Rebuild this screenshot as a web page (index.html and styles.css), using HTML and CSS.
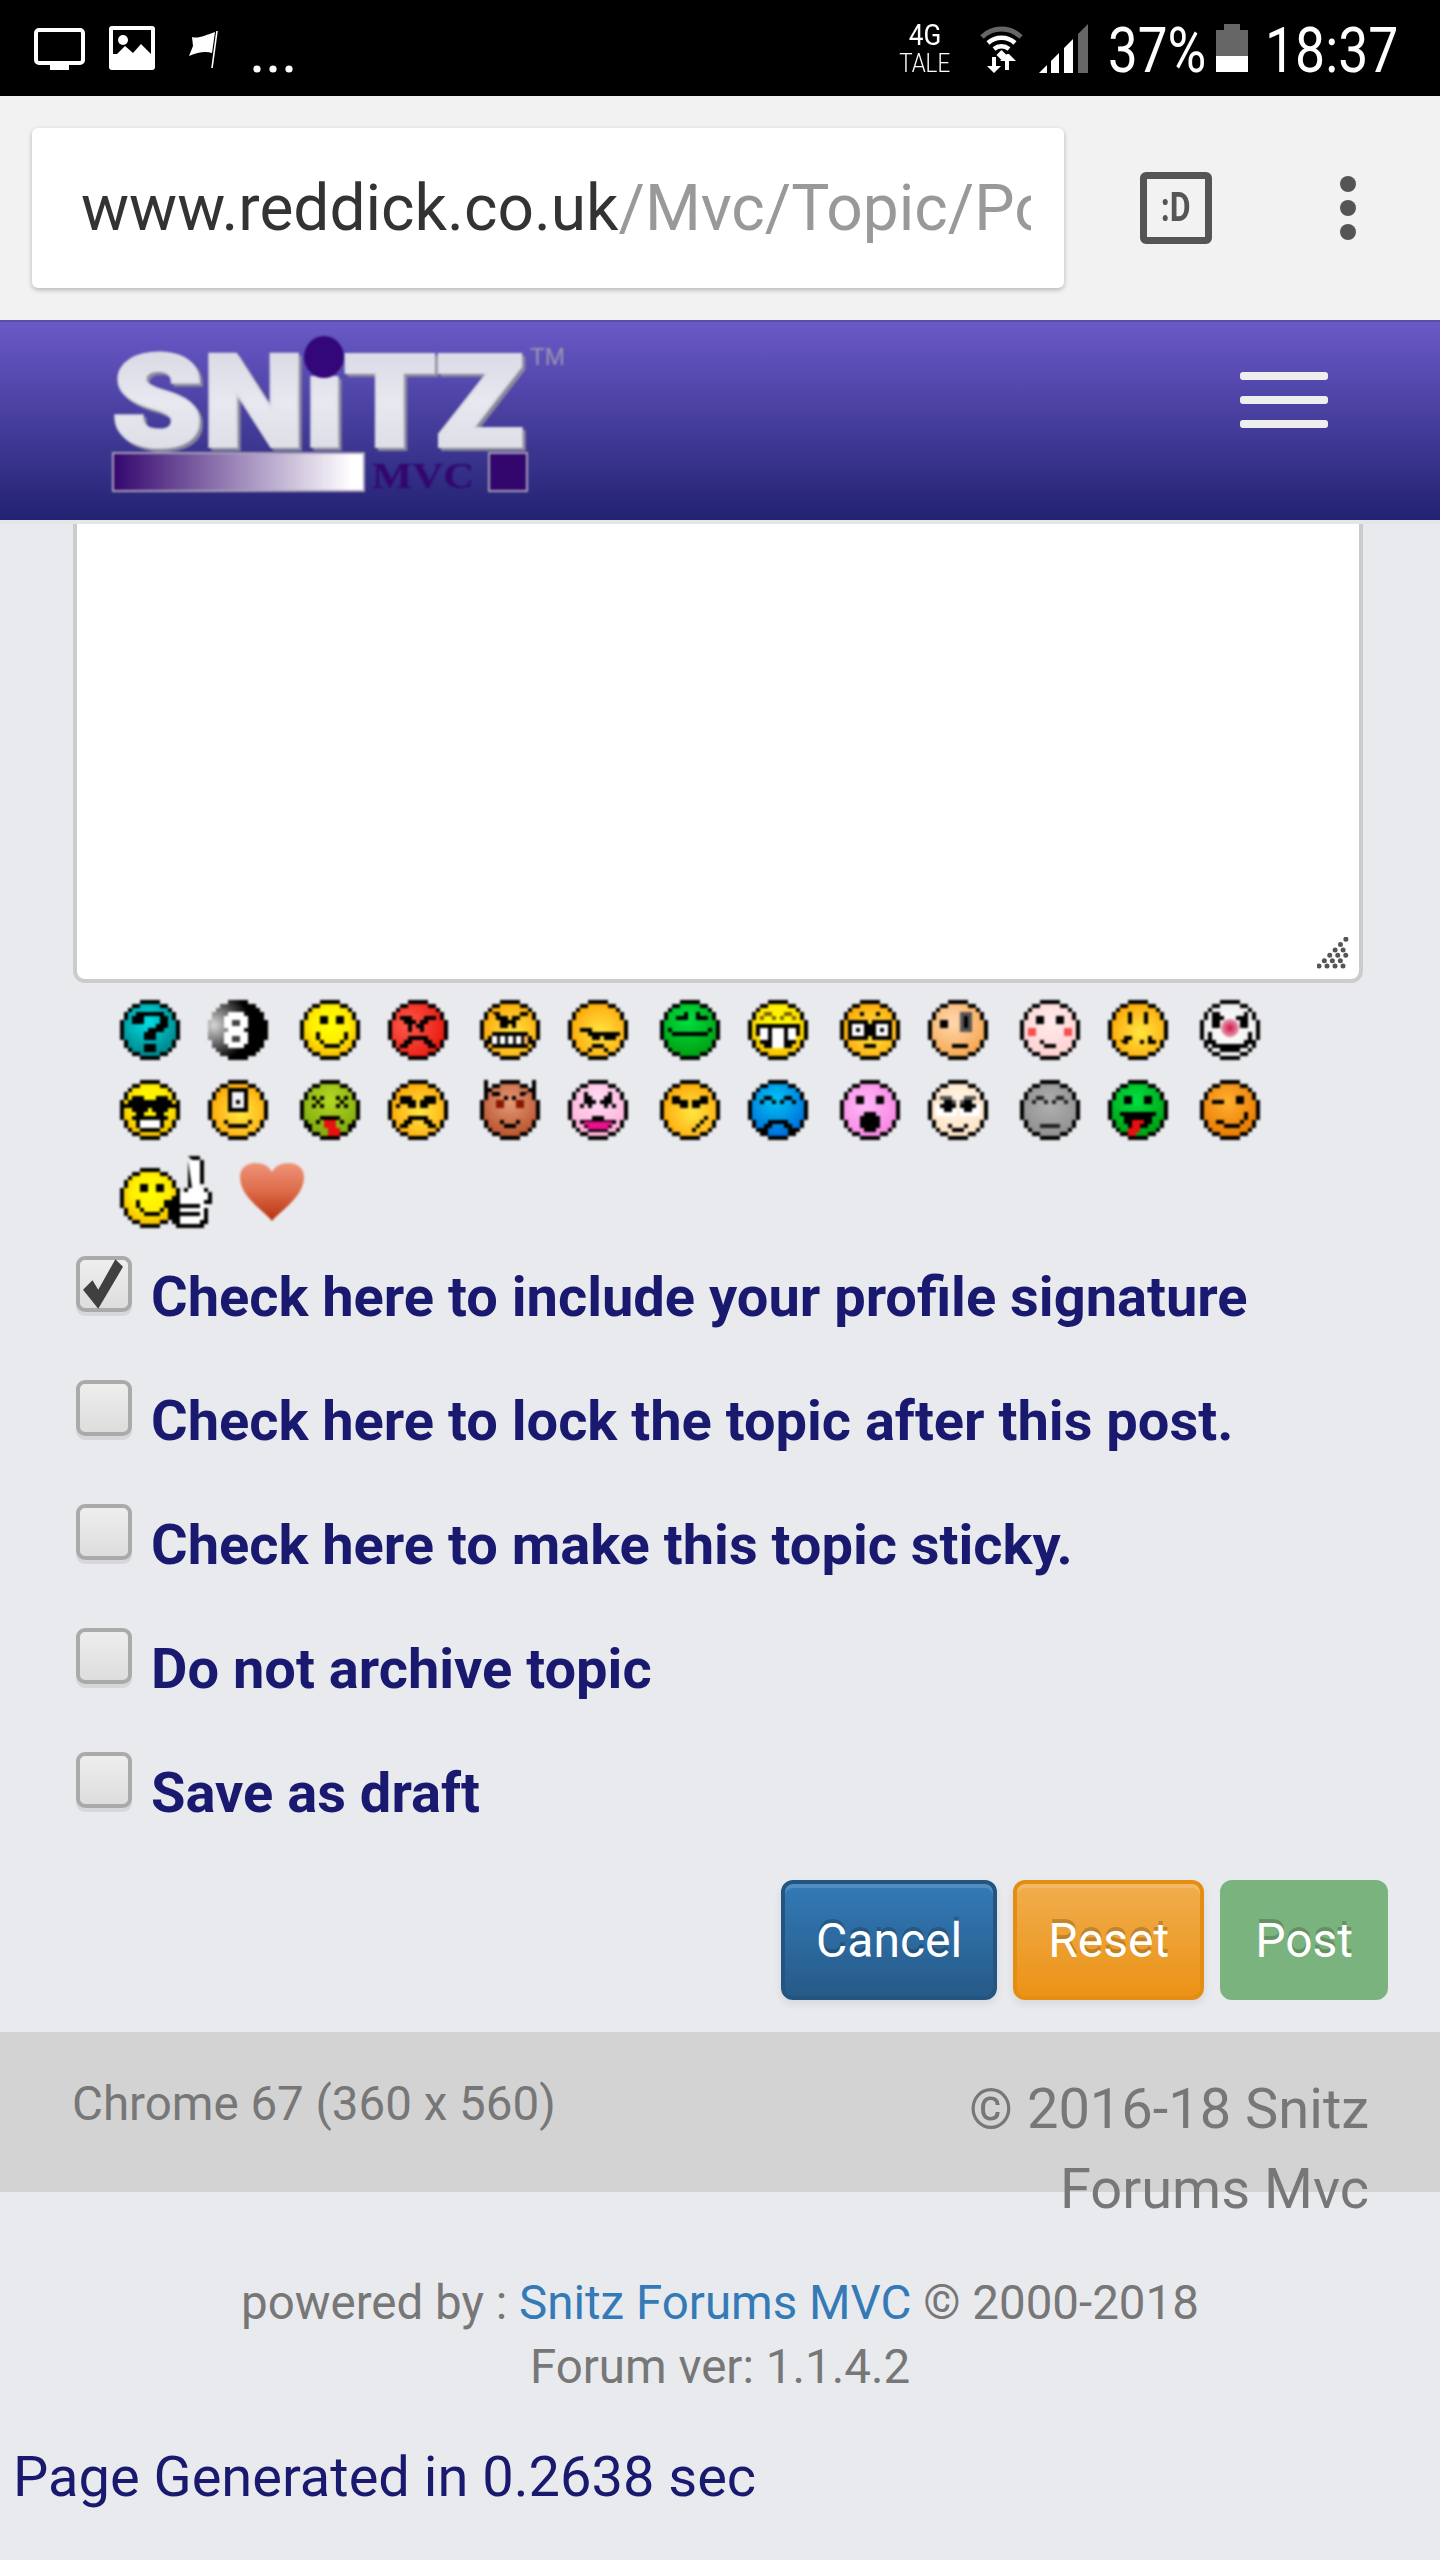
FILE: index.html
```html
<!DOCTYPE html>
<html lang="en">
<head>
<meta charset="utf-8">
<title>Snitz Forums MVC</title>
<link rel="stylesheet" href="styles.css">
</head>
<body>
<svg class="defs" aria-hidden="true">
  <defs>
    <radialGradient id="yel" cx=".5" cy=".4" r=".65"><stop offset="0" stop-color="#ffff00"/><stop offset=".55" stop-color="#ffee00"/><stop offset="1" stop-color="#f4b400"/></radialGradient>
    <radialGradient id="ora" cx=".55" cy=".55" r=".65"><stop offset="0" stop-color="#ffe640"/><stop offset=".6" stop-color="#ffbe1e"/><stop offset="1" stop-color="#fba400"/></radialGradient>
    <radialGradient id="tea" cx=".45" cy=".35" r=".7"><stop offset="0" stop-color="#00e0e4"/><stop offset="1" stop-color="#007f84"/></radialGradient>
    <radialGradient id="red" cx=".3" cy=".4" r=".8"><stop offset="0" stop-color="#ff5a4a"/><stop offset="1" stop-color="#e8140c"/></radialGradient>
    <radialGradient id="grn" cx=".45" cy=".3" r=".75"><stop offset="0" stop-color="#00e040"/><stop offset="1" stop-color="#009c10"/></radialGradient>
    <radialGradient id="pea" cx=".4" cy=".35" r=".75"><stop offset="0" stop-color="#ffd8b0"/><stop offset="1" stop-color="#f5a348"/></radialGradient>
    <radialGradient id="pal" cx=".5" cy=".35" r=".7"><stop offset="0" stop-color="#ffecec"/><stop offset="1" stop-color="#ffcfd0"/></radialGradient>
    <radialGradient id="bro" cx=".5" cy=".35" r=".7"><stop offset="0" stop-color="#e49a78"/><stop offset="1" stop-color="#b8502a"/></radialGradient>
    <radialGradient id="lim" cx=".5" cy=".3" r=".7"><stop offset="0" stop-color="#b4d820"/><stop offset="1" stop-color="#80aa10"/></radialGradient>
    <radialGradient id="lpk" cx=".5" cy=".3" r=".7"><stop offset="0" stop-color="#ffdcf4"/><stop offset="1" stop-color="#ffb0d8"/></radialGradient>
    <radialGradient id="mag" cx=".4" cy=".4" r=".7"><stop offset="0" stop-color="#ffb8f8"/><stop offset="1" stop-color="#f884e0"/></radialGradient>
    <radialGradient id="blu" cx=".45" cy=".3" r=".75"><stop offset="0" stop-color="#00c4f4"/><stop offset="1" stop-color="#0068d8"/></radialGradient>
    <radialGradient id="cre" cx=".5" cy=".4" r=".7"><stop offset="0" stop-color="#fff6e8"/><stop offset="1" stop-color="#ffe0c0"/></radialGradient>
    <radialGradient id="gry" cx=".5" cy=".4" r=".7"><stop offset="0" stop-color="#b0b0b0"/><stop offset="1" stop-color="#8c8c8c"/></radialGradient>
    <radialGradient id="dor" cx=".45" cy=".35" r=".7"><stop offset="0" stop-color="#ffb030"/><stop offset="1" stop-color="#e87800"/></radialGradient>
    <radialGradient id="wht" cx=".5" cy=".5" r=".7"><stop offset="0" stop-color="#ffffff"/><stop offset="1" stop-color="#e8e8e8"/></radialGradient>
    <radialGradient id="bal" cx=".1" cy=".42" r=".8"><stop offset="0" stop-color="#d8d8d8"/><stop offset=".45" stop-color="#555"/><stop offset=".75" stop-color="#000"/></radialGradient>
    <radialGradient id="nos" cx=".5" cy=".5" r=".5"><stop offset="0" stop-color="#d0104a"/><stop offset="1" stop-color="#e8a0b0"/></radialGradient>
    <linearGradient id="hrt" x1="0" y1="0" x2="0" y2="1"><stop offset="0" stop-color="#f0937a"/><stop offset=".5" stop-color="#dc6a48"/><stop offset="1" stop-color="#b83010"/></linearGradient>
    <linearGradient id="lbar" x1="0" y1="0" x2="1" y2="0"><stop offset="0" stop-color="#33066e"/><stop offset=".95" stop-color="#ffffff"/></linearGradient>
    <linearGradient id="lsil" x1="0" y1="0" x2="0" y2="1"><stop offset="0" stop-color="#d4d4e0"/><stop offset=".5" stop-color="#e8e8f0"/><stop offset="1" stop-color="#d8d8e2"/></linearGradient>
    <symbol id="b" viewBox="0 0 15 15">
      <path fill="#000" d="M5 0H10V1H12V2H13V3H14V5H15V10H14V12H13V13H12V14H10V15H5V14H3V13H2V12H1V10H0V5H1V3H2V2H3V1H5Z"/>
      <path d="M5 1H10V2H12V3H13V5H14V10H13V12H12V13H10V14H5V13H3V12H2V10H1V5H2V3H3V2H5Z"/>
    </symbol>
  </defs>
</svg>

<div class="status">
  <div class="st-left">
    <svg class="ic-mon" viewBox="0 0 51 42"><rect x="2" y="2" width="47" height="33" rx="3" fill="none" stroke="#fff" stroke-width="4"/><rect x="16" y="36" width="19" height="6" fill="#fff"/></svg>
    <svg class="ic-img" viewBox="0 0 46 44"><rect width="46" height="44" rx="3" fill="#fff"/><rect x="4" y="4" width="38" height="24" fill="#000"/><circle cx="14" cy="14" r="5" fill="#fff"/><path d="M4 32 L16 20 L24 27 L32 18 L42 28 V40 H4Z" fill="#fff"/></svg>
    <svg class="ic-flag" viewBox="0 0 30 37"><path d="M4 6 C10 8 18 4 27 1 L24 22 C18 20 10 21 1 25 L5 15Z" fill="#fff"/><path d="M29 0 L24 37" stroke="#fff" stroke-width="1.6"/></svg>
    <svg class="ic-dots" viewBox="0 0 40 8"><circle cx="4" cy="4" r="3.6" fill="#fff"/><circle cx="20" cy="4" r="3.6" fill="#fff"/><circle cx="36" cy="4" r="3.6" fill="#fff"/></svg>
  </div>
  <div class="st-right">
    <div class="net"><span class="net-a">4G</span><span class="net-b">TALE</span></div>
    <svg class="ic-wifi" viewBox="0 0 43 49"><path d="M2 13 A28 28 0 0 1 41 13" fill="none" stroke="#666" stroke-width="5"/><path d="M8 19 A20 20 0 0 1 35 19 M14 25 A12 12 0 0 1 29 25" fill="none" stroke="#fff" stroke-width="4.5"/><path d="M21.5 26l5 5-5 5-5-5z" fill="#fff"/><path d="M12 33v9h-5l7 7 7-7h-5v-9zM27 30l-7 7h5v9h4v-9h7l-7-7z" fill="#fff"/></svg>
    <svg class="ic-sig" viewBox="0 0 49 49"><path d="M0 49 L8 41 V49Z M12 37 L20 29 V49 H12Z M25 24 L34 15 V49 H25Z" fill="#fff"/><path d="M39 10 L49 0 V49 H39Z" fill="#666"/></svg>
    <span class="pct">37%</span>
    <svg class="ic-bat" viewBox="0 0 32 48"><path d="M8 0h16v6h8v26H0V6h8z" fill="#666"/><rect y="32" width="32" height="16" fill="#fff"/></svg>
    <span class="clock">18:37</span>
  </div>
</div>

<div class="toolbar">
  <div class="url"><span class="url-text">www.reddick.co.uk<span class="url-path">/Mvc/Topic/Posting</span></span></div>
  <div class="tabs"><span class="tabs-t">:D</span></div>
  <div class="kebab"><i></i><i></i><i></i></div>
</div>

<header class="hdr">
  <svg class="logo" viewBox="0 0 460 160" role="img" aria-label="Snitz MVC">
    <text class="logo-word" x="0" y="110" textLength="412" lengthAdjust="spacingAndGlyphs" fill="url(#lsil)">SNiTZ</text>
    <ellipse cx="212" cy="21" rx="20" ry="21" fill="#33067a"/>
    <text class="logo-tm" x="418" y="29" textLength="35" lengthAdjust="spacingAndGlyphs">TM</text>
    <rect x="1" y="117" width="251" height="38" fill="url(#lbar)" stroke="#a89fb8" stroke-width="2"/>
    <text class="logo-mvc" x="260" y="152" textLength="102" lengthAdjust="spacingAndGlyphs">MVC</text>
    <rect x="377" y="117" width="38" height="38" fill="#33066e" stroke="#a89fb8" stroke-width="2"/>
  </svg>
  <button class="burger" type="button" aria-label="Menu"><i></i><i></i><i></i></button>
</header>

<main class="main">
  <div class="area">
    <svg class="grip" viewBox="0 0 32 32"><path d="M2 29L29 2M10 29L29 10M18 29L29 18M26 29L29 26" fill="none" stroke="#555" stroke-width="5" stroke-linecap="round" stroke-dasharray="0 7.6"/></svg>
  </div>

  <div class="smilies">
    <div class="sm-row">
      <svg class="sm" viewBox="0 0 15 15"><use href="#b" fill="url(#tea)"/><path d="M4 3h7v1h1v3h-1v1h-2v2h-3v-2h1v-1h2v-1h1v-2h-4v2h-3v-2h1zM6 11h3v2h-3z"/></svg>
      <svg class="sm" viewBox="0 0 15 15"><path fill="url(#bal)" d="M5 0H10V1H12V2H13V3H14V5H15V10H14V12H13V13H12V14H10V15H5V14H3V13H2V12H1V10H0V5H1V3H2V2H3V1H5Z"/><path fill="#fff" d="M5 3h4v1h1v3h-1v1h1v3h-1v1h-4v-1h-1v-3h1v-1h-1v-3h1z"/><path fill="#444" d="M6 5h2v1.5h-2zM6 9h2v1.5h-2z"/></svg>
      <svg class="sm" viewBox="0 0 15 15"><use href="#b" fill="url(#yel)"/><path d="M5 4h2v2h-2zM9 4h2v2h-2zM4 8h1v2h1v1h4v-1h1v-2h1v2h-1v1h-1v1h-4v-1h-1v-1h-1z"/></svg>
      <svg class="sm" viewBox="0 0 15 15"><use href="#b" fill="url(#red)"/><path d="M3 4h3v1h1v1h1v-1h1v-1h3v1h-2v1h-1v2h-1v-1h-1v-1h-1v2h-1v-2h-1v-1h-1zM3 11h1v-1h1v-1h5v1h1v1h1v1h-2v-1h-1v-1h-3v1h-1v1h-2z"/></svg>
      <svg class="sm" viewBox="0 0 15 15"><use href="#b" fill="url(#ora)"/><path d="M3 3h2v1h2v1h1v-1h2v-1h2v1h-2v1h-1v2h-1v-1h-2v-1h-2v-1zM5 5h2v2h-2z"/><path d="M3 8h9v1h1v2h-1v1h-9v-1h-1v-2h1z"/><path fill="#fff" d="M3 9h1.3v2h-1.3zM5 9h1.3v2h-1.3zM7 9h1.3v2h-1.3zM9 9h1.3v2h-1.3z"/><path fill="#ffb060" d="M11 9h1v2h-1z"/></svg>
      <svg class="sm" viewBox="0 0 15 15"><use href="#b" fill="url(#ora)"/><path d="M3 7h3v1h1v0h6v1h-1v1h-3v-1h-1v1h-2v-1h-1v-1h-2zM5 13v-1h1v-1h3v1h1v1h-1v-1h-3v1z"/></svg>
      <svg class="sm" viewBox="0 0 15 15"><use href="#b" fill="url(#grn)"/><path d="M4 4h2v-1h1v2h-3zM9 3h1v1h2v1h-3zM2 7h1v1h9v-1h1v1h-1v1h-9v-1h-1z"/></svg>
      <svg class="sm" viewBox="0 0 15 15"><use href="#b" fill="url(#yel)"/><path d="M4 3h2v1h1v1h-1v-1h-2v1h-1v-1h1zM9 3h2v1h1v1h-1v-1h-2v1h-1v-1h1z" fill="#7a6000"/><path d="M2 6h11v3h-1v2h-1v1h-7v-1h-1v-2h-1z"/><path fill="#fff" d="M3 7h2v3h-2zM6 7h3v5h-3zM10 7h2v3h-2z"/></svg>
      <svg class="sm" viewBox="0 0 15 15"><use href="#b" fill="url(#ora)"/><path d="M2 5h5v1h1v-1h5v5h-5v-1h-1v1h-5z"/><path fill="#fff" d="M3 6h3v3h-3zM9 6h3v3h-3z"/><path d="M4 7h1v1h-1zM10 7h1v1h-1zM6 11h3v1h-3zM5 3h1v1h-1zM9 3h1v1h-1z"/></svg>
      <svg class="sm" viewBox="0 0 15 15"><use href="#b" fill="url(#pea)"/><path d="M3 5h2v2h-2zM6 11h4v1h-4z"/><path fill="#555" d="M8 3h3v5h-3z"/><path d="M9 4h1v3h-1z"/></svg>
      <svg class="sm" viewBox="0 0 15 15"><use href="#b" fill="url(#pal)"/><path d="M4 4h2v2h-2zM9 4h2v2h-2zM5 10h1v1h3v1h-3v-1h-1z"/><path fill="#f45050" d="M2 7h2v2h-2zM11 7h2v2h-2z"/></svg>
      <svg class="sm" viewBox="0 0 15 15"><use href="#b" fill="url(#ora)"/><path d="M5 3h1v3h-1zM9 3h1v3h-1zM3 10h1v-1h2v1h1v1h1v-1h2v-1h1v1h1v1h-2v-1h-1v1h-2v-1h-2v1h-1z"/></svg>
      <svg class="sm" viewBox="0 0 15 15"><use href="#b" fill="url(#wht)"/><path d="M3 3h2v1h1v1h-1v2h-2zM10 4h1v-1h1v4h-2v-2h-1v-1zM2 8h1v2h1v1h7v-1h1v-2h1v3h-1v1h-9v-1h-1zM5 13h5v-1h-5z"/><circle cx="7.5" cy="7" r="2.3" fill="url(#nos)"/></svg>
    </div>
    <div class="sm-row">
      <svg class="sm" viewBox="0 0 15 15"><use href="#b" fill="url(#yel)"/><path d="M0 6h2v-1h1v-1h3v1h3v-1h3v1h1v1h2v1h-3v1h-1v1h-2v-1h-1v-1h-1v1h-1v1h-2v-1h-1v-1h-3z"/><path d="M3 9h9v1h-1v2h-1v1h-5v-1h-1v-2h-1z"/><path fill="#fff" d="M5 10h5v2h-5z"/></svg>
      <svg class="sm" viewBox="0 0 15 15"><use href="#b" fill="url(#ora)"/><path d="M5 2h5v6h-5z"/><path fill="#f2f2f2" d="M6 3h3v4h-3z"/><path d="M7 5h1v1h-1zM4 10h1v1h5v-1h1v1h-1v1h-5v-1h-1z"/></svg>
      <svg class="sm" viewBox="0 0 15 15"><use href="#b" fill="url(#lim)"/><path d="M3 4h1v1h1v-1h1v1h-1v1h1v1h-1v-1h-1v1h-1v-1h1v-1h-1zM9 4h1v1h1v-1h1v1h-1v1h1v1h-1v-1h-1v1h-1v-1h1v-1h-1zM2 12h1v-1h2v-1h5v1h2v1h1v-1h-1v0h-1v-1h-1v-1h-5v1h-1v1h-2z"/><path fill="#e81010" d="M6 10h3v2h1v2h-3v-2h-1z"/></svg>
      <svg class="sm" viewBox="0 0 15 15"><use href="#b" fill="url(#ora)"/><path d="M3 4h3v1h1v2h-2v-1h-2zM2 6h1v1h-1zM12 4h-3v1h-1v2h2v-1h2zM3 11h1v-1h1v-1h5v1h1v1h1v1h-2v-1h-1v-1h-3v1h-1v1h-2z"/></svg>
      <svg class="sm" viewBox="0 0 15 15"><use href="#b" fill="url(#bro)"/><path d="M1 0h1v3h-1zM13 0h1v3h-1zM3 3h2v1h2v1h-1v-1h-2v-0h-1zM12 3h-2v1h-2v1h1v-1h2zM5 10h1v1h3v-1h1v1h-1v1h-3v-1h-1z"/><path fill="#8a1500" d="M4 5h2v2h-2zM9 5h2v2h-2z"/></svg>
      <svg class="sm" viewBox="0 0 15 15"><use href="#b" fill="url(#lpk)"/><path d="M4 3h1v1h1v1h1v1h-1v1h-1v-1h-1v1h-1v-1h1zM11 3h-1v1h-1v1h-1v1h1v1h1v-1h1v1h1v-1h-1z"/><path d="M3 10h3v-1h3v1h3v1h-1v1h-1v1h-5v-1h-1v-1h-1z"/><path fill="#e8108c" d="M4 10.4h7v1h-1v1h-5v-1h-1z"/></svg>
      <svg class="sm" viewBox="0 0 15 15"><use href="#b" fill="url(#ora)"/><path d="M3 4h2v1h2v2h-2v-1h-2zM12 4h-2v1h-2v2h2v-1h2zM11 9h1v1h-1v1h-1v1h-1v1h-1v-1h1v-1h1v-1h1z"/></svg>
      <svg class="sm" viewBox="0 0 15 15"><use href="#b" fill="url(#blu)"/><path d="M3 5h1v-1h2v1h1v1h-1v-1h-2v1h-1zM8 5h1v-1h2v1h1v1h-1v-1h-2v1h-1zM3 12h1v-1h1v-1h5v1h1v1h1v1h-2v-1h-1v-1h-3v1h-1v1h-2z"/></svg>
      <svg class="sm" viewBox="0 0 15 15"><use href="#b" fill="url(#mag)"/><path d="M4 4h2v2h-2zM9 4h2v2h-2zM6 8h3v1h1v3h-1v1h-3v-1h-1v-3h1z"/></svg>
      <svg class="sm" viewBox="0 0 15 15"><use href="#b" fill="url(#cre)"/><path fill="#555" d="M3 4h3v1h1v1h-1v-1h-3zM9 4h3v1h-3v1h-1v-1h1z"/><path fill="#fff" d="M2 6h5v3h-5zM8 6h5v3h-5z"/><path d="M4 5h2v1h1v1h-1v1h-2v-1h-1v-1h1zM9 5h2v1h1v1h-1v1h-2v-1h-1v-1h1zM5 11h1v1h3v-1h1v1h-1v1h-3v-1h-1z"/></svg>
      <svg class="sm" viewBox="0 0 15 15"><use href="#b" fill="url(#gry)"/><path fill="#222" d="M3 5h1v-1h2v1h1v1h-1v-1h-2v1h-1zM8 5h1v-1h2v1h1v1h-1v-1h-2v1h-1zM5 11h5v1h-5z"/></svg>
      <svg class="sm" viewBox="0 0 15 15"><use href="#b" fill="url(#grn)"/><path d="M4 4h2v2h-2zM9 4h2v2h-2zM3 8h9v1h-1v2h-1v1h-5v-1h-1v-2h-1z"/><path fill="#e81010" d="M6 10h3v1h-1v2h-1v1h-2v-2h1z"/></svg>
      <svg class="sm" viewBox="0 0 15 15"><use href="#b" fill="url(#dor)"/><path d="M3 5h3v1h-3zM9 4h2v2h-2zM11 8h1v2h-1v1h-1v1h-4v-1h-2v-1h2v1h4v-1h1z"/></svg>
    </div>
    <div class="sm-row sm-row-last">
      <svg class="sm-thumb" viewBox="0 0 23 18">
        <use href="#b" x="0" y="3" width="15" height="15" fill="url(#yel)"/>
        <path d="M5 7h2v2h-2zM9 7h2v2h-2zM4 11h1v2h1v1h4v-1h1v-2h1v2h-1v1h-1v1h-4v-1h-1v-1h-1z"/>
        <path d="M17 0h3v1h1v6h-1v1h2v1h1v3h-1v5h-1v1h-7v-1h-1v-2h-1v-4h1v-1h1v-1h2v-1h1v-7h1z"/>
        <path fill="#fff" d="M17 1h3v7h1v1h1v2h-1v1h1v1h-1v3h-1v1h-5v-2h5v-1h-5v-1h5v-1h-5v-3h2v-1h1z"/>
      </svg>
      <svg class="sm-heart" viewBox="0 0 64 58"><path fill="url(#hrt)" d="M32 58 C24 48 0 34 0 14 C0 5 7 0 15 0 C23 0 29 3 32 9 C35 3 41 0 49 0 C57 0 64 5 64 14 C64 34 40 48 32 58Z"/></svg>
    </div>
  </div>

  <div class="checks">
    <label class="chk"><span class="box on"><svg viewBox="0 0 42 52"><path d="M0 32 L10 22 L16 32 L34 0 L42 8 L16 52Z" fill="#404040"/></svg></span><span class="chk-t">Check here to include your profile signature</span></label>
    <label class="chk"><span class="box"></span><span class="chk-t">Check here to lock the topic after this post.</span></label>
    <label class="chk"><span class="box"></span><span class="chk-t">Check here to make this topic sticky.</span></label>
    <label class="chk"><span class="box"></span><span class="chk-t">Do not archive topic</span></label>
    <label class="chk"><span class="box"></span><span class="chk-t">Save as draft</span></label>
  </div>

  <div class="actions">
    <button class="btn btn-cancel" type="button">Cancel</button>
    <button class="btn btn-reset" type="button">Reset</button>
    <button class="btn btn-post" type="button">Post</button>
  </div>
</main>

<footer>
  <div class="band">
    <div class="band-l">Chrome 67 (360 x 560)</div>
    <div class="band-r">© 2016-18 Snitz Forums Mvc</div>
  </div>
  <div class="powered">powered by : <a href="#">Snitz Forums MVC</a> © 2000-2018<br>Forum ver: 1.1.4.2</div>
  <div class="gen">Page Generated in 0.2638 sec</div>
</footer>
</body>
</html>
```

FILE: styles.css
```css
* { box-sizing: border-box; }
html, body { margin: 0; padding: 0; }
body { background: #e9eaee; font-family: Roboto, "Noto Sans", sans-serif; min-height: 2560px; overflow-x: hidden; }
.defs { display: block; width: 0; height: 0; }

/* status bar */
.status { height: 96px; background: #000; color: #fff; display: flex; justify-content: space-between; align-items: center; padding: 0 42px 0 34px; }
.st-left { display: flex; align-items: flex-start; height: 96px; }
.ic-mon { width: 51px; height: 42px; margin-top: 28px; }
.ic-img { width: 46px; height: 44px; margin: 26px 0 0 24px; }
.ic-flag { width: 30px; height: 37px; margin: 31px 0 0 33px; }
.ic-dots { width: 40px; height: 8px; margin: 65px 0 0 35px; }
.st-right { display: flex; align-items: center; height: 96px; }
.net { width: 52px; display: flex; flex-direction: column; align-items: center; }
.net-a { font-size: 29px; line-height: 30px; transform: scaleX(.9); }
.net-b { font-size: 26px; line-height: 26px; font-weight: 300; transform: scaleX(.86); white-space: nowrap; }
.ic-wifi { width: 43px; height: 49px; margin-left: 29px; }
.ic-sig { width: 49px; height: 49px; margin-left: 16px; }
.pct, .clock { font-size: 63px; line-height: 96px; white-space: nowrap; transform-origin: left center; display: block; margin-top: 6px; }
.pct { width: 94px; margin-left: 20px; transform: scaleX(.84); }
.ic-bat { width: 32px; height: 48px; margin-left: 14px; }
.clock { width: 133px; margin-left: 17px; transform: scaleX(.85); }

/* browser toolbar */
.toolbar { height: 224px; background: #f2f2f2; display: flex; align-items: center; padding-left: 32px; }
.url { width: 1032px; height: 160px; background: #fff; border-radius: 6px; box-shadow: 0 2px 5px rgba(0,0,0,.25); padding: 2px 33px 0 49px; display: flex; align-items: center; }
.url-text { display: block; overflow: hidden; white-space: nowrap; font-size: 64px; line-height: 90px; color: #333; width: 100%; }
.url-path { color: #999; }
.tabs { width: 72px; height: 72px; margin-left: 76px; border: 7px solid #555; border-radius: 6px; display: flex; align-items: center; justify-content: center; color: #555; font-size: 40px; line-height: 40px; font-weight: 700; }
.tabs-t { display: block; transform: scaleX(.8); }
.kebab { margin-left: 128px; display: flex; flex-direction: column; gap: 8px; }
.kebab i { display: block; width: 16px; height: 16px; border-radius: 50%; background: #555; }

/* site header */
.hdr { height: 204px; border-bottom: 4px solid #e5e6e8; background: linear-gradient(#6a5ac8, #232272); box-shadow: inset 0 2px 0 #5a4fa8; display: flex; justify-content: space-between; align-items: flex-start; padding: 16px 112px 0; }
.logo { width: 460px; height: 160px; display: block; overflow: visible; filter: blur(.8px); }
.logo-word { font-family: Roboto, sans-serif; font-weight: 900; font-size: 128px; stroke: #dcdce6; stroke-width: 4px; paint-order: stroke; filter: drop-shadow(3px 3px 0 rgba(140,140,155,.95)); }
.logo-tm { font-family: "Liberation Sans", sans-serif; font-size: 24px; fill: #9a98b4; }
.logo-mvc { font-family: "Liberation Serif", serif; font-weight: 700; font-size: 36px; fill: #33066e; }
.burger { border: 0; padding: 0; margin-top: 36px; background: none; display: flex; flex-direction: column; gap: 16px; }
.burger i { display: block; width: 88px; height: 8px; border-radius: 3px; background: #eee; }

/* form */
.area { position: relative; height: 459px; margin: 0 77px 0 73px; background: #fff; border: 4px solid #ccc; border-top: 0; border-radius: 0 0 12px 12px; }
.grip { position: absolute; right: 10px; bottom: 10px; width: 32px; height: 32px; filter: blur(.4px); }
.smilies { margin-top: 17px; padding-left: 120px; }
.sm-row { display: flex; height: 60px; margin-bottom: 20px; }
.sm { display: block; width: 60px; height: 60px; filter: blur(1px); }
.sm:nth-child(odd) { margin-right: 28px; }
.sm:nth-child(even) { margin-right: 32px; }
.sm-row-last { height: 72px; margin: -4px 0 0; }
.sm-thumb { display: block; width: 92px; height: 72px; margin-right: 28px; filter: blur(1px); }
.sm-heart { display: block; width: 64px; height: 58px; margin-top: 7px; filter: blur(.8px); }

.checks { margin-top: 28px; padding-left: 76px; display: flex; flex-direction: column; gap: 44px; }
.chk { display: flex; align-items: flex-start; gap: 19px; height: 80px; font-size: 56px; line-height: 80px; font-weight: 700; color: #191970; }
.chk-t { padding-top: 1px; }
.box { width: 56px; height: 56px; flex: none; background: linear-gradient(#eee, #ddd); border: 4px solid #aaa; border-radius: 9px; box-shadow: 0 4px 0 #d6d7da; display: flex; align-items: center; justify-content: center; }
.box svg { width: 40px; height: 50px; margin: 0 0 0 -2px; }

.actions { margin-top: 48px; padding-right: 52px; display: flex; justify-content: flex-end; gap: 16px; }
.btn { height: 120px; padding: 0 31px; font: 400 48px Roboto, sans-serif; color: #fff; border-radius: 12px; border: 4px solid; text-shadow: 0 -4px 0 rgba(0,0,0,.2); box-shadow: inset 0 4px 0 rgba(255,255,255,.15), 0 4px 8px rgba(0,0,0,.08); }
.btn-cancel { background: linear-gradient(#337ab7, #265a88); border-color: #245580; }
.btn-reset { background: linear-gradient(#f0ad4e, #eb9316); border-color: #e38d13; }
.btn-post { background: #7ab37d; border-color: #7ab37d; box-shadow: none; }

/* footer */
.band { height: 160px; margin-top: 32px; background: #d3d3d3; color: #777; display: flex; justify-content: space-between; padding: 0 71px 0 72px; }
.band-l { font-size: 47.5px; line-height: 68px; padding-top: 38px; }
.band-r { width: 440px; font-size: 56px; line-height: 80px; padding-top: 37px; text-align: right; }
.powered { margin-top: 79px; text-align: center; color: #777; font-size: 47.5px; line-height: 64px; }
.powered a { color: #337ab7; text-decoration: none; }
.gen { margin-top: 38px; padding-left: 13px; font-size: 56px; line-height: 80px; color: #191970; }
```
